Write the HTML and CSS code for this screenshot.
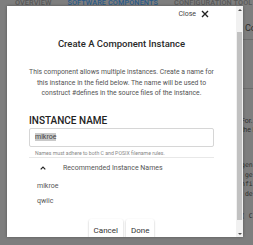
FILE: index.html
```html
<!DOCTYPE html>
<html lang="en">
<head>
  <meta charset="UTF-8">
  <title>Software Components</title>
  <link rel="stylesheet" href="styles.css">
</head>
<body>

  <div class="page">
    <nav class="tabs">
      <span class="tab">OVERVIEW</span>
      <span class="tab active">SOFTWARE COMPONENTS</span>
      <span class="tab">CONFIGURATION TOOL</span>
    </nav>

    <div class="workspace">
      <div class="main-area"></div>
      <aside class="details">
        <div class="details-head">Configure</div>
        <div class="details-meta"></div>
        <p class="details-text">For. the driver<br>the instance</p>
        <pre class="details-code">gen
 ge
nfi
 de</pre>
        <p class="details-foot">( Cancel</p>
      </aside>
    </div>
  </div>

  <div class="modal">
    <div class="modal-body">
      <div class="close-row">
        <span>Close</span>
        <svg width="8" height="8" viewBox="0 0 8 8">
          <path d="M1 1L7 7M7 1L1 7" stroke="#222" stroke-width="1.4" fill="none"/>
        </svg>
      </div>

      <h2 class="title">Create A Component Instance</h2>

      <p class="intro">This component allows multiple instances. Create a name for this instance in the field below. The name will be used to construct #defines in the source files of the instance.</p>

      <div class="field-label">INSTANCE NAME</div>
      <div class="input"><span class="selected">mikroe</span></div>
      <div class="hint">Names must adhere to both C and POSIX filename rules.</div>
      <div class="divider"></div>

      <div class="recommended">
        <svg class="chevron" width="6" height="4" viewBox="0 0 6 4">
          <path d="M0.7 3.4L3 1L5.3 3.4" stroke="#222" stroke-width="1.2" fill="none"/>
        </svg>
        <span>Recommended Instance Names</span>
      </div>

      <ul class="suggestions">
        <li>mikroe</li>
        <li>qwiic</li>
      </ul>

      <div class="actions">
        <button class="btn">Cancel</button>
        <button class="btn">Done</button>
      </div>
    </div>

    <div class="scrollbar">
      <div class="arrow up"></div>
      <div class="track"><div class="thumb"></div></div>
      <div class="arrow down"></div>
    </div>
  </div>

</body>
</html>
```

FILE: styles.css
```css
* {
  box-sizing: border-box;
}

body {
  margin: 0;
  width: 253px;
  height: 245px;
  overflow: hidden;
  font-family: Roboto, 'Liberation Sans', sans-serif;
  background: #7e7e7e;
}

/* page behind the dialog (dimmed) */
.tabs {
  display: flex;
  align-items: flex-start;
  height: 6px;
  overflow: hidden;
  padding-left: 7px;
}

.tab {
  padding: 0 8px;
  font-size: 7.3px;
  line-height: 6px;
  font-weight: 500;
  letter-spacing: 0.1px;
  white-space: nowrap;
  color: #585858;
}

.tab.active {
  color: #2a5a88;
}

.workspace {
  display: flex;
  height: 239px;
}

.main-area {
  width: 241px;
  flex: none;
}

.details {
  flex: 1;
  overflow: hidden;
  white-space: nowrap;
  color: #2e2e2e;
  font-size: 7px;
}

.details-head {
  height: 34px;
  padding-top: 15px;
  padding-left: 4px;
  font-size: 9px;
  line-height: 14px;
  border-bottom: 1px solid #6c6c6c;
}

.details-meta {
  height: 49px;
  border-bottom: 1px solid #6c6c6c;
}

.details-text {
  margin: 28px 0 0;
  line-height: 9px;
}

.details-code {
  margin: 26px 0 0;
  font-family: 'DejaVu Sans Mono', monospace;
  font-size: 6.5px;
  line-height: 9.7px;
}

.details-foot {
  margin: 12px 0 0;
  font-family: 'DejaVu Sans Mono', monospace;
  font-size: 6.5px;
}

/* dialog */
.modal {
  position: absolute;
  left: 7px;
  top: 6px;
  width: 236px;
  height: 231px;
  display: flex;
  background: #fff;
  box-shadow: 0 0 3px rgba(0,0,0,0.3);
}

.modal-body {
  flex: 1;
  overflow: hidden;
  padding: 0 22px;
}

.close-row {
  display: flex;
  justify-content: flex-end;
  align-items: center;
  gap: 5px;
  height: 16px;
  margin-right: 5px;
  font-size: 7px;
  color: #444;
}

.title {
  margin: 16px 0 0;
  font-size: 9.5px;
  line-height: 12px;
  font-weight: 500;
  text-align: center;
  color: #2a2a2a;
}

.intro {
  margin: 17px 0 0;
  font-size: 6.8px;
  line-height: 10.5px;
  text-align: center;
  color: #525252;
}

.field-label {
  margin-top: 16px;
  font-size: 10px;
  line-height: 12px;
  font-weight: 500;
  color: #222;
}

.input {
  margin-top: 1px;
  height: 19px;
  display: flex;
  align-items: center;
  padding-left: 5px;
  border: 1px solid #d6d6d6;
  border-radius: 2px;
  font-size: 7px;
  color: #444;
}

.selected {
  background: #c9c9c9;
}

.hint {
  margin-top: 3px;
  padding-left: 6px;
  font-size: 5.2px;
  line-height: 6px;
  color: #888;
}

.divider {
  height: 1px;
  margin-top: 1px;
  background: #e8e8e8;
}

.recommended {
  display: flex;
  align-items: center;
  gap: 17px;
  height: 12px;
  margin-top: 4px;
  font-size: 7px;
  color: #555;
}

.chevron {
  margin-left: 11px;
}

.suggestions {
  list-style: none;
  margin: 5.5px 0 0;
  padding-left: 8px;
  font-size: 7px;
  line-height: 15px;
  color: #555;
}

.actions {
  display: flex;
  justify-content: center;
  gap: 3px;
  margin-top: 9.5px;
}

.btn {
  height: 24px;
  padding: 0 5px;
  border: none;
  border-radius: 2px;
  background: #fff;
  box-shadow: 0 1px 2px rgba(0,0,0,0.3);
  font-family: inherit;
  font-size: 8px;
  color: #333;
}

/* fake scrollbar */
.scrollbar {
  width: 7px;
  display: flex;
  flex-direction: column;
  background: #f1f1f1;
}

.arrow {
  height: 7px;
  display: flex;
  justify-content: center;
  align-items: center;
}

.arrow::after {
  content: "";
  border-left: 2px solid transparent;
  border-right: 2px solid transparent;
}

.arrow.up::after {
  border-bottom: 2px solid #505050;
}

.arrow.down::after {
  border-top: 2px solid #505050;
}

.track {
  flex: 1;
  display: flex;
  padding: 19px 1px 10px;
}

.thumb {
  flex: 1;
  background: #c1c1c1;
}
```
